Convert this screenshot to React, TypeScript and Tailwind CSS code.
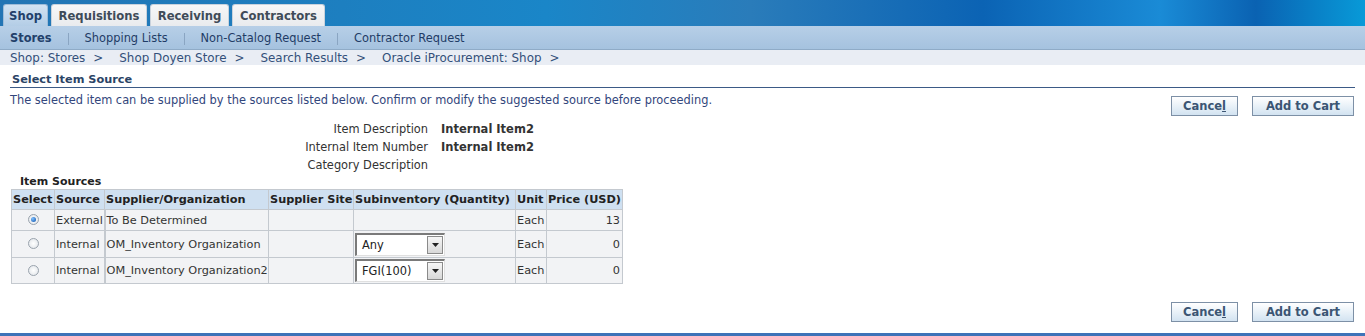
import React from "react";

const FONT = "font-['DejaVu_Sans',Tahoma,sans-serif]";

const tabs = [
  { label: "Shop", w: "w-[45px]", active: true },
  { label: "Requisitions", w: "w-[96px]" },
  { label: "Receiving", w: "w-[79px]" },
  { label: "Contractors", w: "w-[93px]" },
];

const subnav = ["Shopping Lists", "Non-Catalog Request", "Contractor Request"];

const crumbs = ["Shop: Stores", "Shop Doyen Store", "Search Results", "Oracle iProcurement: Shop"];

type Row = { source: string; org: string; sub?: string; unit: string; price: string; checked?: boolean; h: string };

const rows: Row[] = [
  { source: "External", org: "To Be Determined", unit: "Each", price: "13", checked: true, h: "h-[21px]" },
  { source: "Internal", org: "OM_Inventory Organization", sub: "Any", unit: "Each", price: "0", h: "h-[27px]" },
  { source: "Internal", org: "OM_Inventory Organization2", sub: "FGI(100)", unit: "Each", price: "0", h: "h-[26px]" },
];

const headers = ["Select", "Source", "Supplier/Organization", "Supplier Site", "Subinventory (Quantity)", "Unit", "Price (USD)"];

function Buttons() {
  return (
    <div className="flex gap-[14px]">
      <button className="h-[20px] w-[67px] border border-[#7d90a6] bg-[linear-gradient(#ffffff,#d2e3f1)] pt-[1px] text-[11.5px] font-bold leading-[17px] text-[#3b5573]">
        Cance<span className="underline">l</span>
      </button>
      <button className="h-[20px] w-[102px] border border-[#7d90a6] bg-[linear-gradient(#ffffff,#d2e3f1)] pt-[1px] text-[11.5px] font-bold leading-[17px] text-[#3b5573]">
        Add to Cart
      </button>
    </div>
  );
}

function Radio({ checked }: { checked?: boolean }) {
  return (
    <span className="inline-flex h-[11px] w-[11px] items-center justify-center rounded-full border border-[#9aa3ad] bg-[radial-gradient(circle,#ffffff,#dfe3e8)] align-middle">
      {checked && <span className="h-[5px] w-[5px] rounded-full bg-[radial-gradient(circle_at_35%_35%,#7fc0ff,#0b4fa8)]" />}
    </span>
  );
}

function Select({ value }: { value: string }) {
  return (
    <div className="flex h-[23px] w-[90px] items-stretch border-t-2 border-l-2 border-t-[#7a7a7a] border-l-[#7a7a7a] border-r border-b border-r-[#e0e0e0] border-b-[#e0e0e0] bg-white">
      <span className="flex-1 pl-[5px] pt-[1px] text-[11.4px] leading-[19px] text-[#222]">{value}</span>
      <span className="m-[1px] flex w-[16px] items-center justify-center border border-[#8a8a8a] bg-[linear-gradient(#f6f6f6,#d8d8d8)]">
        <svg width="7" height="4" viewBox="0 0 7 4">
          <path d="M0 0h7L3.5 4z" fill="#222" />
        </svg>
      </span>
    </div>
  );
}

export default function App() {
  return (
    <div className={`${FONT} flex h-[336px] w-[1365px] flex-col overflow-hidden bg-white text-[11.4px]`}>
      {/* Tabs band */}
      <div className="flex h-[26px] shrink-0 items-end gap-[3px] pl-[3px] bg-[linear-gradient(90deg,#2375b4_0%,#1d7fc0_25%,#1a86c8_40%,#2a7cba_55%,#0b63b4_72%,#1a8bd6_85%,#0a62b2_92%,#089ad8_100%)]">
        {tabs.map((t) =>
          t.active ? (
            <div
              key={t.label}
              className={`${t.w} flex h-[22px] items-center justify-center rounded-t-[3px] border border-b-0 border-[#9fbcd8] bg-[linear-gradient(#d3e3f2,#b3cde6)] pt-[2px] text-[11.6px] font-bold text-[#22406a]`}
            >
              {t.label}
            </div>
          ) : (
            <div
              key={t.label}
              className={`${t.w} flex h-[22px] items-center justify-center rounded-t-[3px] border border-b-0 border-[#c9d2dc] bg-[linear-gradient(#f7f7f7,#e9ebee)] pt-[2px] text-[11.6px] font-bold text-[#3f4b58]`}
            >
              {t.label}
            </div>
          )
        )}
      </div>

      {/* Sub navigation */}
      <div className="flex h-[24px] shrink-0 items-center border-b border-[#8fabc7] bg-[linear-gradient(#b7cfe7,#a5c2df)] pl-[10px] pt-[3px] text-[11.4px] text-[#1f3c66]">
        <span className="font-bold text-[#22406a]">Stores</span>
        {subnav.map((s) => (
          <React.Fragment key={s}>
            <span className="mx-[16px] h-[12px] w-[1px] bg-[#8aa5c2]" />
            <span>{s}</span>
          </React.Fragment>
        ))}
      </div>

      {/* Breadcrumbs */}
      <div className="flex h-[15px] shrink-0 items-center bg-[#e9edf4] pl-[10px] pt-[1px] text-[11.9px] leading-[15px] text-[#33507a]">
        {crumbs.map((c) => (
          <span key={c} className="mr-[16px] whitespace-nowrap">
            {c}
            <span className="ml-[8px]">&gt;</span>
          </span>
        ))}
      </div>

      {/* Page header */}
      <div className="px-[10px]">
        <div className="mt-[5px] border-b border-[#3b5a86] pl-[2px] pt-[2px] text-[11.3px] font-bold leading-[15px] text-[#2b4466]">
          Select Item Source
        </div>
        <div className="flex items-start justify-between pr-[1px]">
          <p className="mt-[5px] text-[11.4px] leading-[14px] text-[#32467c]">
            The selected item can be supplied by the sources listed below. Confirm or modify the suggested source before proceeding.
          </p>
          <div className="mt-[8px]">
            <Buttons />
          </div>
        </div>

        {/* Item info */}
        <div className="mt-[4px] grid grid-cols-[418px_1fr] gap-x-[13px] text-[11.4px] leading-[18px] text-[#333]">
          <span className="text-right">Item Description</span>
          <span className="text-[11.5px] font-bold">Internal Item2</span>
          <span className="text-right">Internal Item Number</span>
          <span className="text-[11.5px] font-bold">Internal Item2</span>
          <span className="text-right">Category Description</span>
          <span />
        </div>

        {/* Item sources */}
        <div className="pl-[10px] pt-[1px] text-[11px] font-bold leading-[14px] text-[#222]">Item Sources</div>
        <table className="ml-[1px] w-[611px] table-fixed border-collapse text-[11.3px] text-[#333]">
          <colgroup>
            <col className="w-[43px]" />
            <col className="w-[50px]" />
            <col className="w-[164px]" />
            <col className="w-[85px]" />
            <col className="w-[162px]" />
            <col className="w-[31px]" />
            <col className="w-[76px]" />
          </colgroup>
          <thead>
            <tr className="h-[20px] bg-[#cfe0f1] text-left text-[#222]">
              {headers.map((h) => (
                <th key={h} className="overflow-hidden whitespace-nowrap border border-[#c4c9cf] px-[1px] pt-[2px] text-[11.3px] font-bold">
                  {h}
                </th>
              ))}
            </tr>
          </thead>
          <tbody>
            {rows.map((r) => (
              <tr key={r.org} className={`${r.h} bg-[#f2f3f5]`}>
                <td className="border border-[#c4c9cf] text-center">
                  <Radio checked={r.checked} />
                </td>
                <td className="border border-[#c4c9cf] px-[1px] pt-[2px]">{r.source}</td>
                <td className="whitespace-nowrap border border-l-2 border-[#c4c9cf] px-[1px] pt-[2px]">{r.org}</td>
                <td className="border border-[#c4c9cf]" />
                <td className="border border-[#c4c9cf] pl-[1px]">{r.sub && <Select value={r.sub} />}</td>
                <td className="border border-[#c4c9cf] px-[1px] pt-[2px]">{r.unit}</td>
                <td className="border border-[#c4c9cf] px-[2px] pt-[2px] text-right">{r.price}</td>
              </tr>
            ))}
          </tbody>
        </table>

        <div className="mt-[18px] flex justify-end pr-[1px]">
          <Buttons />
        </div>
      </div>

      <div className="mt-auto h-[3px] shrink-0 bg-[#3e73b8]" />
    </div>
  );
}
